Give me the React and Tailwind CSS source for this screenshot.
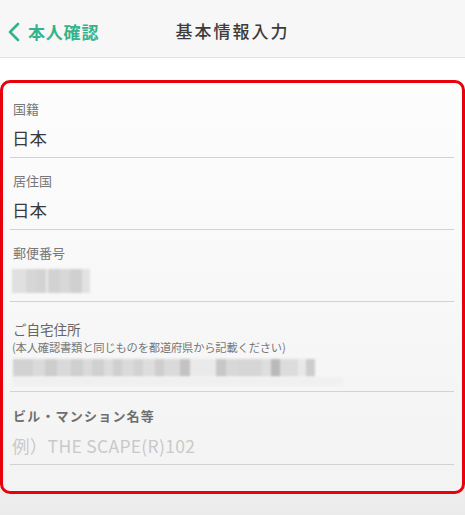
import React from "react";

const font = { fontFamily: '"Noto Sans CJK JP", "Noto Sans", sans-serif' };

function Divider() {
  return <div className="h-px bg-[#d2d2d2]" />;
}

export default function App() {
  return (
    <div
      className="w-[465px] h-[515px] overflow-hidden bg-gradient-to-b from-white via-white to-[#ebebeb]"
      style={font}
    >
      {/* header */}
      <div className="relative h-[58px] bg-[#f7f7f7] border-b border-[#e2e2e2] flex items-center justify-center">
        <div className="absolute left-[7px] top-[3px] h-full flex items-center gap-[7px] text-[#33b48d]">
          <svg width="14" height="20" viewBox="0 0 14 20" className="mt-[1px]">
            <path d="M11 2 L3 10 L11 18" fill="none" stroke="#33b48d" strokeWidth="2.6" strokeLinecap="round" strokeLinejoin="round" />
          </svg>
          <span className="text-[17px] font-bold leading-none tracking-[0.8px]">本人確認</span>
        </div>
        <span className="text-[17px] font-medium text-[#3c3c3c] tracking-[2px] leading-none mt-[4px]">基本情報入力</span>
      </div>

      <div className="h-[22px]" />

      {/* red box */}
      <div className="w-[465px] h-[414px] border-[3.5px] border-[#e8000b] rounded-[10px] bg-gradient-to-b from-[#fdfdfd] to-[#f3f3f3] px-[7px] overflow-hidden">
        {/* 国籍 */}
        <div className="pt-[17px] pl-[3px] text-[13px] leading-[18px] text-[#777]">国籍</div>
        <div className="mt-[7px] pl-[2px] h-[26px] text-[17.5px] leading-[26px] text-[#3a3a3a]">日本</div>
        <div className="mt-[6px] mr-[1px]"><Divider /></div>

        {/* 居住国 */}
        <div className="pt-[14px] pl-[3px] text-[13px] leading-[18px] text-[#777]">居住国</div>
        <div className="mt-[7px] pl-[2px] h-[26px] text-[17.5px] leading-[26px] text-[#3a3a3a]">日本</div>
        <div className="mt-[6px] mr-[1px]"><Divider /></div>

        {/* 郵便番号 */}
        <div className="pt-[14px] pl-[3px] text-[13px] leading-[18px] text-[#777]">郵便番号</div>
        <div className="mt-[7px] h-[26px] pl-[2px] flex items-start">
          <div className="flex blur-[1.2px] h-[24px]">
            <div className="w-[14px] bg-[#e0e0e0]" />
            <div className="w-[10px] bg-[#d6d6d6]" />
            <div className="w-[10px] bg-[#d3d3d3]" />
            <div className="w-[2px] bg-[#ececec]" />
            <div className="w-[12px] bg-[#d2d2d2]" />
            <div className="w-[10px] bg-[#d8d8d8]" />
            <div className="w-[12px] bg-[#d0d0d0]" />
            <div className="w-[8px] bg-[#e2e2e2]" />
          </div>
        </div>
        <div className="mt-[6px] mr-[1px]"><Divider /></div>

        {/* ご自宅住所 */}
        <div className="pt-[18px] pl-[3px] text-[13.5px] leading-[18px] text-[#666]">ご自宅住所</div>
        <div className="pl-[2px] text-[11.3px] leading-[18px] text-[#777] tracking-[-0.2px]">(本人確認書類と同じものを都道府県から記載ください)</div>
        <div className="mt-[3px] h-[27px] pl-[3px]">
          <div className="flex h-[18px] blur-[1.3px]">
            <div className="w-[20px] bg-[#d2d2d2]" />
            <div className="w-[12px] bg-[#dadada]" />
            <div className="w-[12px] bg-[#cdcdcd]" />
            <div className="w-[14px] bg-[#d9d9d9]" />
            <div className="w-[12px] bg-[#cfcfcf]" />
            <div className="w-[9px] bg-[#dadada]" />
            <div className="w-[12px] bg-[#d0d0d0]" />
            <div className="w-[9px] bg-[#dcdcdc]" />
            <div className="w-[9px] bg-[#cfcfcf]" />
            <div className="w-[12px] bg-[#dadada]" />
            <div className="w-[9px] bg-[#d2d2d2]" />
            <div className="w-[12px] bg-[#dddddd]" />
            <div className="w-[9px] bg-[#cecece]" />
            <div className="w-[16px] bg-[#dadada]" />
            <div className="w-[10px] bg-[#c3c3c3]" />
            <div className="w-[26px] bg-[#eaeaea]" />
            <div className="w-[10px] bg-[#c7c7c7]" />
            <div className="w-[12px] bg-[#d8d8d8]" />
            <div className="w-[24px] bg-[#d6d6d6]" />
            <div className="w-[9px] bg-[#dedede]" />
            <div className="w-[9px] bg-[#b9b9b9]" />
            <div className="w-[18px] bg-[#dcdcdc]" />
            <div className="w-[8px] bg-[#e8e8e8]" />
            <div className="w-[9px] bg-[#cdcdcd]" />
          </div>
          <div className="h-[9px] w-[330px] bg-[#f0f0f0] blur-[1.5px]" />
        </div>
        <div className="mt-[5px] mr-[1px]"><Divider /></div>

        {/* ビル・マンション名等 */}
        <div className="pt-[15px] pl-[3px] text-[13px] leading-[18px] font-bold text-[#6f6f6f] tracking-[1.2px]">ビル・マンション名等</div>
        <div className="mt-[8px] pl-[2px] h-[26px] text-[17.5px] leading-[26px] text-[#c9c9c9] tracking-[0.3px]">例）THE SCAPE(R)102</div>
        <div className="mt-[5px] mr-[1px]"><Divider /></div>
      </div>
    </div>
  );
}
